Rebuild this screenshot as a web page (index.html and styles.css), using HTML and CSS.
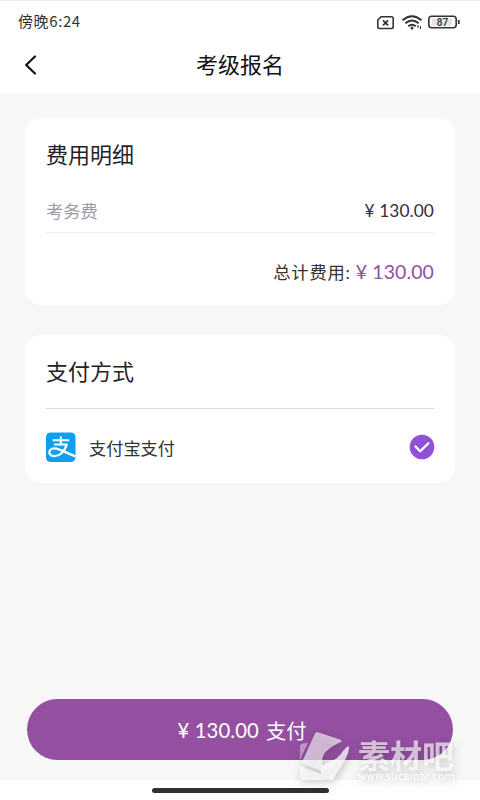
FILE: index.html
```html
<!DOCTYPE html>
<html lang="zh-CN">
<head>
<meta charset="utf-8">
<title>考级报名</title>
<link rel="stylesheet" href="styles.css">
</head>
<body>
<div class="phone">
  <header class="top">
    <div class="status">
      <span class="time">傍晚6:24</span>
      <svg class="indicators" width="86" height="20" viewBox="0 0 86 20" fill="none" stroke="#333" stroke-width="1.6">
        <path d="M6 5.800h10.500q1.700 0 1.700 1.700v8.300q0 1.700-1.700 1.700H4.500q-1.700 0-1.700-1.700V9z"/>
        <path d="M8 9.300l5 5m0-5l-5 5" stroke-width="1.800"/>
        <path d="M27.500 9.200q9.500-8 19 0M30.300 12.300q6.700-5.600 13.400 0M33.200 15.200q3.800-3 7.600 0" stroke-width="2"/>
        <circle cx="37" cy="17" r="1.500" fill="#333" stroke="none"/>
        <path d="M43 14v3m2.400-2v3" stroke-width="1"/>
        <rect x="53.800" y="5.300" width="27.400" height="11.400" rx="3"/>
        <rect x="57" y="7.500" width="20" height="7" fill="#e4e4e4" stroke="none"/>
        <path d="M83.800 9v4" stroke-width="1.800"/>
        <text class="charge" x="67.500" y="14.600" text-anchor="middle">87</text>
      </svg>
    </div>
    <nav class="nav">
      <svg class="back" width="14" height="22" viewBox="0 0 14 22" fill="none" stroke="#111" stroke-width="2.200" stroke-linecap="round" stroke-linejoin="round"><path d="M11 2.500L2.200 11 11 19.500"/></svg>
      <h1 class="title">考级报名</h1>
    </nav>
  </header>
  <main class="content">
    <section class="card fees">
      <h2 class="heading">费用明细</h2>
      <div class="fee-row"><span class="muted">考务费</span><span class="price">¥ 130.00</span></div>
      <div class="total"><span class="total-label">总计费用:</span><span class="sum">¥ 130.00</span></div>
    </section>
    <section class="card methods">
      <h2 class="heading">支付方式</h2>
      <div class="method">
        <svg width="30" height="30" viewBox="0 0 30 30"><rect width="29.500" height="29.500" y=".5" rx="4.500" fill="#0f9ff0"/><g fill="none" stroke="#fff" stroke-width="2"><path d="M6.500 8.300h16.700M14.800 4.600v8M8 12.600h13.500"/><path d="M20.700 12.600C18.500 20 13.500 24.400 8 24.200 4.300 24 2.800 21.700 3.400 19.500 4 17 7 15.700 10.500 16.600 15.500 17.800 21.500 21.500 29.500 24.300" stroke-width="2.300"/></g></svg>
        <span class="method-name">支付宝支付</span>
        <svg class="check" width="26" height="26" viewBox="0 0 26 26"><circle cx="13" cy="13" r="12.300" fill="#9050d8"/><path d="M6.500 12.500l4.700 4.700 8.200-8" fill="none" stroke="#fff" stroke-width="2.300" stroke-linecap="round" stroke-linejoin="round"/></svg>
      </div>
    </section>
    <button class="pay"><span class="pay-price">¥ 130.00</span><span>支付</span></button>
  </main>
  <footer class="gesture"><div class="bar"></div></footer>
  <div class="watermark">
    <svg class="mark" width="50" height="50" viewBox="0 0 50 50" fill="#fff"><path d="M15 1.500Q16 -.3 18 .3L40 7.500Q42.500 8.500 41 10C32 14 24 19 22.500 26C21.500 31 24 34 22 39L3 32Q1.500 31.500 2 30z" opacity=".62"/><path d="M49 14C50 23 40 36 34 46Q33 48.500 30 48L1 37Q0 36 .5 34.500L21 42C20 36 23 33 27 31C34 29 40 24 43 19Q46 15 49 14z" opacity=".75"/><path d="M0 36.500L29 48H3Q0 48 0 45z" opacity=".72"/><path d="M0 14q0-3 8-3L0 28z" opacity=".4"/></svg>
    <div class="brand"><span class="brand-name">素材吧</span><span class="brand-url">www.sucaibar.com</span></div>
  </div>
</div>
</body>
</html>
```
FILE: styles.css
```css
* { box-sizing: border-box; }
body { margin: 0; font-family: Lato, "Noto Sans CJK SC", sans-serif; color: #1f2329; }
h1, h2 { margin: 0; font-weight: 400; }
svg { display: block; flex: none; }
.phone { position: relative; width: 480px; height: 800px; overflow: hidden; display: flex; flex-direction: column; background: #f7f7f7; }
.top { height: 93px; background: #fff; border-top: 1px solid #ececec; }
.status { height: 41px; padding: 0 20px 1px 18px; display: flex; justify-content: space-between; align-items: center; }
.time { font: 400 15px/20px "Noto Sans CJK SC", sans-serif; color: #333; letter-spacing: .6px; }
.indicators { margin-right: -1px; }
.charge { font: 500 10px Roboto, sans-serif; fill: #333; stroke: none; }
.nav { height: 46px; display: grid; grid-template-columns: 60px 1fr 60px; align-items: center; }
.back { margin-left: 24px; }
.title { font-size: 22px; line-height: 32px; text-align: center; color: #111; }
.content { flex: 1; padding: 25px 25px 20px; display: flex; flex-direction: column; }
.card { background: #fff; border-radius: 16px; padding: 21px 21px 20px; }
.fees { height: 187px; }
.methods { height: 148px; margin-top: 30px; }
.heading { font-size: 22px; line-height: 32px; }
.fee-row { height: 62px; padding-top: 18px; border-bottom: 1px solid #eee; display: flex; justify-content: space-between; align-items: center; font-size: 17.300px; }
.muted { color: #9b9ba8; }
.price { color: #30313d; letter-spacing: .1px; }
.total { height: 76px; display: flex; justify-content: flex-end; align-items: center; gap: 5px; font-size: 17.300px; color: #333; }
.total-label { letter-spacing: .8px; }
.sum { font-size: 19.500px; color: #934fa0; letter-spacing: .1px; }
.method { margin-top: 20px; border-top: 1px solid #ddd; height: 77px; display: flex; align-items: center; }
.method-name { margin-left: 13px; font-size: 17.200px; color: #333; }
.check { margin-left: auto; margin-right: -1px; }
.pay { margin: auto 2px 0; padding: 0 0 0 4px; height: 61px; border: 0; border-radius: 31px; background: #9550a1; color: #fff; font-family: inherit; font-size: 20.300px; display: flex; align-items: center; justify-content: center; gap: 7px; }
.pay-price { letter-spacing: .1px; }
.gesture { height: 20px; background: #fff; display: flex; justify-content: center; padding-top: 8px; }
.bar { width: 177px; height: 5px; border-radius: 3px; background: #303030; }
.watermark { position: absolute; left: 300px; top: 732px; display: flex; filter: drop-shadow(1px 2px 4px rgba(0, 0, 0, .3)); }
.brand { margin: 6px 0 0 8px; display: flex; flex-direction: column; color: rgba(255, 255, 255, .65); }
.brand-name { font: 700 32px/32px "Noto Sans CJK SC", sans-serif; }
.brand-url { font: 10.400px/12px "DejaVu Sans", sans-serif; white-space: nowrap; color: #fff; }
```
